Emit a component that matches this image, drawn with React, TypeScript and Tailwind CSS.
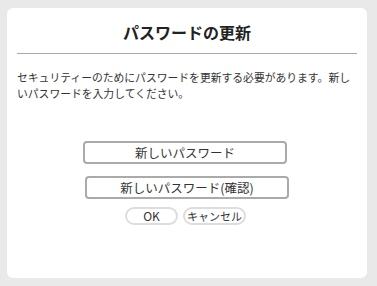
export default function App() {
  const font = { fontFamily: '"Noto Sans CJK JP", "Liberation Sans", sans-serif' };
  return (
    <div className="min-h-[286px] w-full bg-[#e9e9e9] pl-[7px] pt-[8px]" style={font}>
      <div className="flex h-[270px] w-[360px] flex-col rounded-[6px] bg-white px-[10px]">
        <h1 className="mt-[13px] text-center text-[16px] font-semibold leading-[22px] text-[#222]">パスワードの更新</h1>
        <hr className="mt-[10px] border-0 border-t border-[#aaa]" />
        <p className="mt-[15px] text-[10.8px] leading-[16px] text-[#333]">
          セキュリティーのためにパスワードを更新する必要があります。新しいパスワードを入力してください。
        </p>
        <div className="mt-[40px] flex flex-col items-center gap-[12px]">
          <input
            type="password"
            placeholder="新しいパスワード"
            className="mr-[4px] h-[23px] w-[204px] rounded-[4px] border-2 border-[#aaa] text-center text-[12.5px] text-[#333] outline-none placeholder:text-[#333]"
          />
          <input
            type="password"
            placeholder="新しいパスワード(確認)"
            className="h-[23px] w-[204px] rounded-[4px] border-2 border-[#aaa] text-center text-[12.5px] text-[#333] outline-none placeholder:text-[#333]"
          />
        </div>
        <div className="mr-[3px] mt-[8px] flex justify-center gap-[5px]">
          <button className="h-[18px] w-[53px] whitespace-nowrap rounded-full border-2 border-[#ddd] px-0 text-[12px] leading-none text-[#333]">OK</button>
          <button className="h-[18px] w-[63px] whitespace-nowrap rounded-full border-2 border-[#ddd] px-0 text-[11px] leading-none text-[#333]">キャンセル</button>
        </div>
      </div>
    </div>
  );
}
